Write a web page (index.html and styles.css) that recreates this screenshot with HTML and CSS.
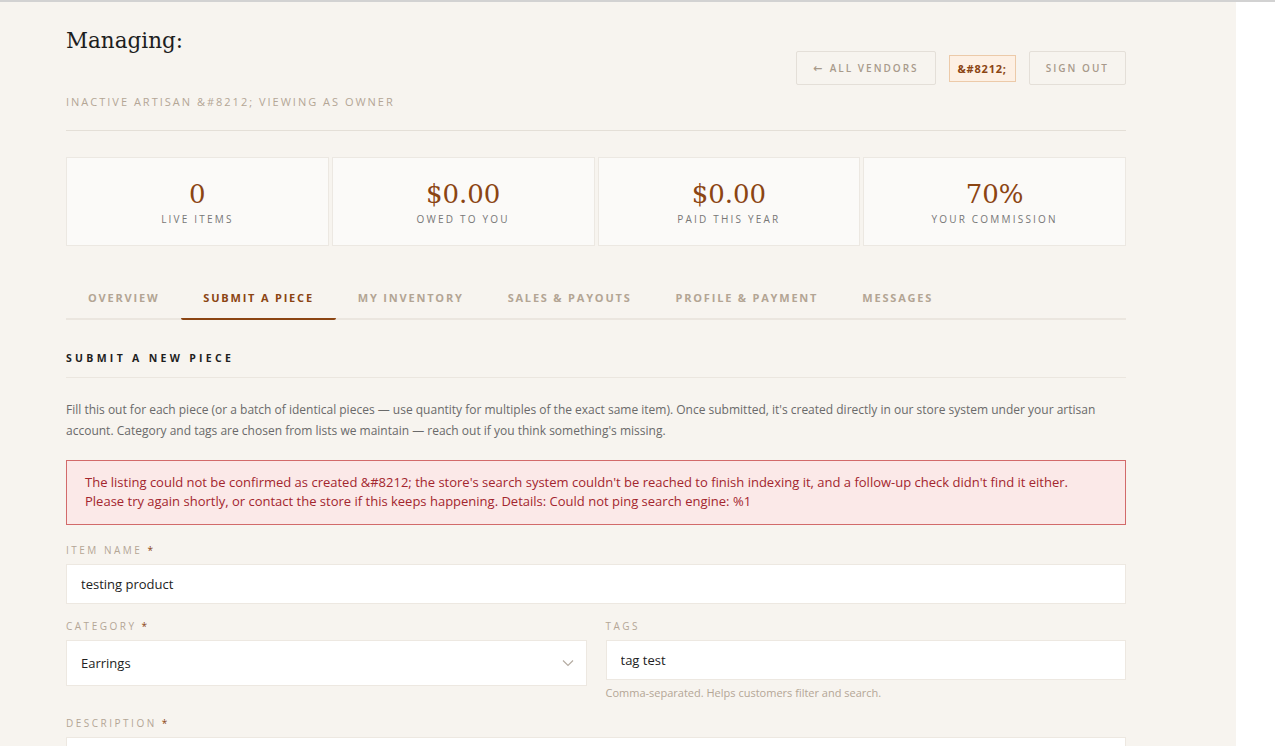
FILE: index.html
```html
<!DOCTYPE html>
<html lang="en">
<head>
  <meta charset="UTF-8">
  <meta name="viewport" content="width=device-width, initial-scale=1.0">
  <title>Vendor Portal</title>
  <link rel="stylesheet" href="styles.css">
</head>
<body>
  <div class="page">
    <div class="container">
      <header class="portal-header">
        <div class="portal-title">
          <h1>Managing:</h1>
          <p class="portal-sub">Inactive Artisan &amp;#8212; viewing as owner</p>
        </div>
        <div class="portal-actions">
          <button class="btn-ghost"><span class="arrow">&larr;</span> All Vendors</button>
          <span class="badge">&amp;#8212;</span>
          <button class="btn-ghost">Sign Out</button>
        </div>
      </header>

      <div class="stats">
        <div class="stat">
          <div class="stat-value">0</div>
          <div class="stat-label">Live Items</div>
        </div>
        <div class="stat">
          <div class="stat-value">$0.00</div>
          <div class="stat-label">Owed to You</div>
        </div>
        <div class="stat">
          <div class="stat-value">$0.00</div>
          <div class="stat-label">Paid This Year</div>
        </div>
        <div class="stat">
          <div class="stat-value">70%</div>
          <div class="stat-label">Your Commission</div>
        </div>
      </div>

      <nav class="tabs">
        <a class="tab">Overview</a>
        <a class="tab active">Submit a Piece</a>
        <a class="tab">My Inventory</a>
        <a class="tab">Sales &amp; Payouts</a>
        <a class="tab">Profile &amp; Payment</a>
        <a class="tab">Messages</a>
      </nav>

      <section class="panel">
        <h2>Submit a New Piece</h2>
        <p class="intro">Fill this out for each piece (or a batch of identical pieces &mdash; use quantity for multiples of the exact same item). Once submitted, it's created directly in our store system under your artisan account. Category and tags are chosen from lists we maintain &mdash; reach out if you think something's missing.</p>

        <div class="alert-error">The listing could not be confirmed as created &amp;#8212; the store's search system couldn't be reached to finish indexing it, and a follow-up check didn't find it either. Please try again shortly, or contact the store if this keeps happening. Details: Could not ping search engine: %1</div>

        <form class="piece-form">
          <div class="field">
            <label>Item Name <span class="req">*</span></label>
            <input type="text" value="testing product">
          </div>

          <div class="field-row">
            <div class="field">
              <label>Category <span class="req">*</span></label>
              <div class="select-wrap">
                <select>
                  <option>Earrings</option>
                  <option>Necklaces</option>
                  <option>Rings</option>
                </select>
                <svg class="chevron" width="12" height="8" viewBox="0 0 12 8"><path d="M1 1.5l5 5 5-5" fill="none" stroke="#b5aca2" stroke-width="1.2"/></svg>
              </div>
            </div>
            <div class="field">
              <label>Tags</label>
              <input type="text" value="tag test">
              <div class="hint">Comma-separated. Helps customers filter and search.</div>
            </div>
          </div>

          <div class="field">
            <label>Description <span class="req">*</span></label>
            <textarea rows="6"></textarea>
          </div>
        </form>
      </section>
    </div>
  </div>
</body>
</html>
```

FILE: styles.css
```css
body {
  margin: 0;
  background: #fff;
  border-top: 2px solid #d2d2d2;
  font-family: "Open Sans", Arial, sans-serif;
  color: #333;
}

.page {
  width: 1236px;
  min-height: 760px;
  background: #f7f4ef;
}

.container {
  width: 1060px;
  margin-left: 66px;
  padding-top: 24px;
}

/* header */

.portal-header {
  display: flex;
  justify-content: space-between;
  align-items: center;
  padding-bottom: 20px;
  border-bottom: 1px solid #e4dfd7;
}

.portal-title h1 {
  margin: 0;
  font-family: "DejaVu Serif", "Liberation Serif", serif;
  font-weight: normal;
  font-size: 21.5px;
  line-height: 30px;
  color: #1e1e1e;
}

.portal-sub {
  margin: 38px 0 0;
  font-size: 11px;
  line-height: 16px;
  letter-spacing: 2px;
  text-transform: uppercase;
  color: #b4a696;
}

.portal-actions {
  display: flex;
  align-items: center;
  gap: 13px;
}

.btn-ghost {
  height: 34px;
  padding: 0 16px;
  background: transparent;
  border: 1px solid #e4dfd8;
  border-radius: 2px;
  font-family: "Open Sans", Arial, sans-serif;
  font-size: 10px;
  font-weight: 600;
  letter-spacing: 2px;
  text-transform: uppercase;
  color: #a89a8b;
  cursor: pointer;
}

.btn-ghost .arrow {
  font-family: "DejaVu Sans", sans-serif;
  font-size: 11px;
  letter-spacing: 0;
  margin-right: 3px;
}

.badge {
  display: inline-block;
  padding: 5px 8px;
  background: #fdf0e4;
  border: 1px solid #eccaa9;
  font-size: 11px;
  line-height: 15px;
  font-weight: 700;
  letter-spacing: 0.8px;
  color: #8b4513;
}

/* stat cards */

.stats {
  display: grid;
  grid-template-columns: repeat(4, 1fr);
  gap: 3px;
  margin-top: 26px;
}

.stat {
  height: 89px;
  box-sizing: border-box;
  padding-top: 21px;
  background: #fbfaf8;
  border: 1px solid #ece8e2;
  text-align: center;
}

.stat-value {
  font-family: "DejaVu Serif", "Liberation Serif", serif;
  font-size: 26px;
  line-height: 30px;
  color: #8b4513;
}

.stat-label {
  margin-top: 3px;
  font-size: 10px;
  line-height: 14px;
  letter-spacing: 2.2px;
  text-transform: uppercase;
  color: #777;
}

/* tabs */

.tabs {
  display: flex;
  margin-top: 32px;
  border-bottom: 2px solid #ebe6df;
}

.tab {
  padding: 12px 22px 12px;
  margin-bottom: -2px;
  font-size: 11px;
  line-height: 16px;
  font-weight: 700;
  letter-spacing: 1.8px;
  text-transform: uppercase;
  color: #b3a594;
  border-bottom: 2px solid transparent;
  cursor: pointer;
}

.tab.active {
  color: #8b4513;
  border-bottom-color: #8b4513;
  border-radius: 0 0 2px 2px;
}

/* submit panel */

.panel h2 {
  margin: 30px 0 0;
  padding-bottom: 11px;
  border-bottom: 1px solid #ebe6df;
  font-size: 10.5px;
  line-height: 16px;
  font-weight: 700;
  letter-spacing: 3.3px;
  text-transform: uppercase;
  color: #1e1e1e;
}

.intro {
  margin: 21px 0 0;
  font-size: 12px;
  line-height: 21px;
  color: #6a6a6a;
}

.alert-error {
  margin-top: 19px;
  padding: 12px 18px 13px;
  background: #fbe9e8;
  border: 1px solid #d26a6a;
  font-size: 13px;
  line-height: 19px;
  color: #a3262e;
}

.piece-form {
  margin-top: 17px;
}

.field {
  margin-bottom: 14px;
}

.field label {
  display: block;
  margin-bottom: 6px;
  font-size: 10px;
  line-height: 16px;
  letter-spacing: 2.5px;
  text-transform: uppercase;
  color: #b4a696;
}

.req {
  color: #8b4513;
}

.field input,
.field select,
.field textarea {
  display: block;
  width: 100%;
  box-sizing: border-box;
  margin: 0;
  background: #fff;
  border: 1px solid #ede8e1;
  border-radius: 0;
  font-family: "Open Sans", Arial, sans-serif;
  font-size: 13px;
  color: #222;
  outline: none;
}

.field input {
  height: 40px;
  padding: 0 14px;
}

.field textarea {
  padding: 12px 14px;
  resize: vertical;
}

.field-row {
  display: grid;
  grid-template-columns: 1fr 1fr;
  gap: 19px;
}

.select-wrap {
  position: relative;
}

.field select {
  height: 46px;
  padding: 0 40px 0 14px;
  appearance: none;
  -webkit-appearance: none;
}

.chevron {
  position: absolute;
  right: 13px;
  top: 19px;
  pointer-events: none;
}

.hint {
  margin-top: 5px;
  font-size: 11px;
  line-height: 16px;
  color: #b4a696;
}
```
